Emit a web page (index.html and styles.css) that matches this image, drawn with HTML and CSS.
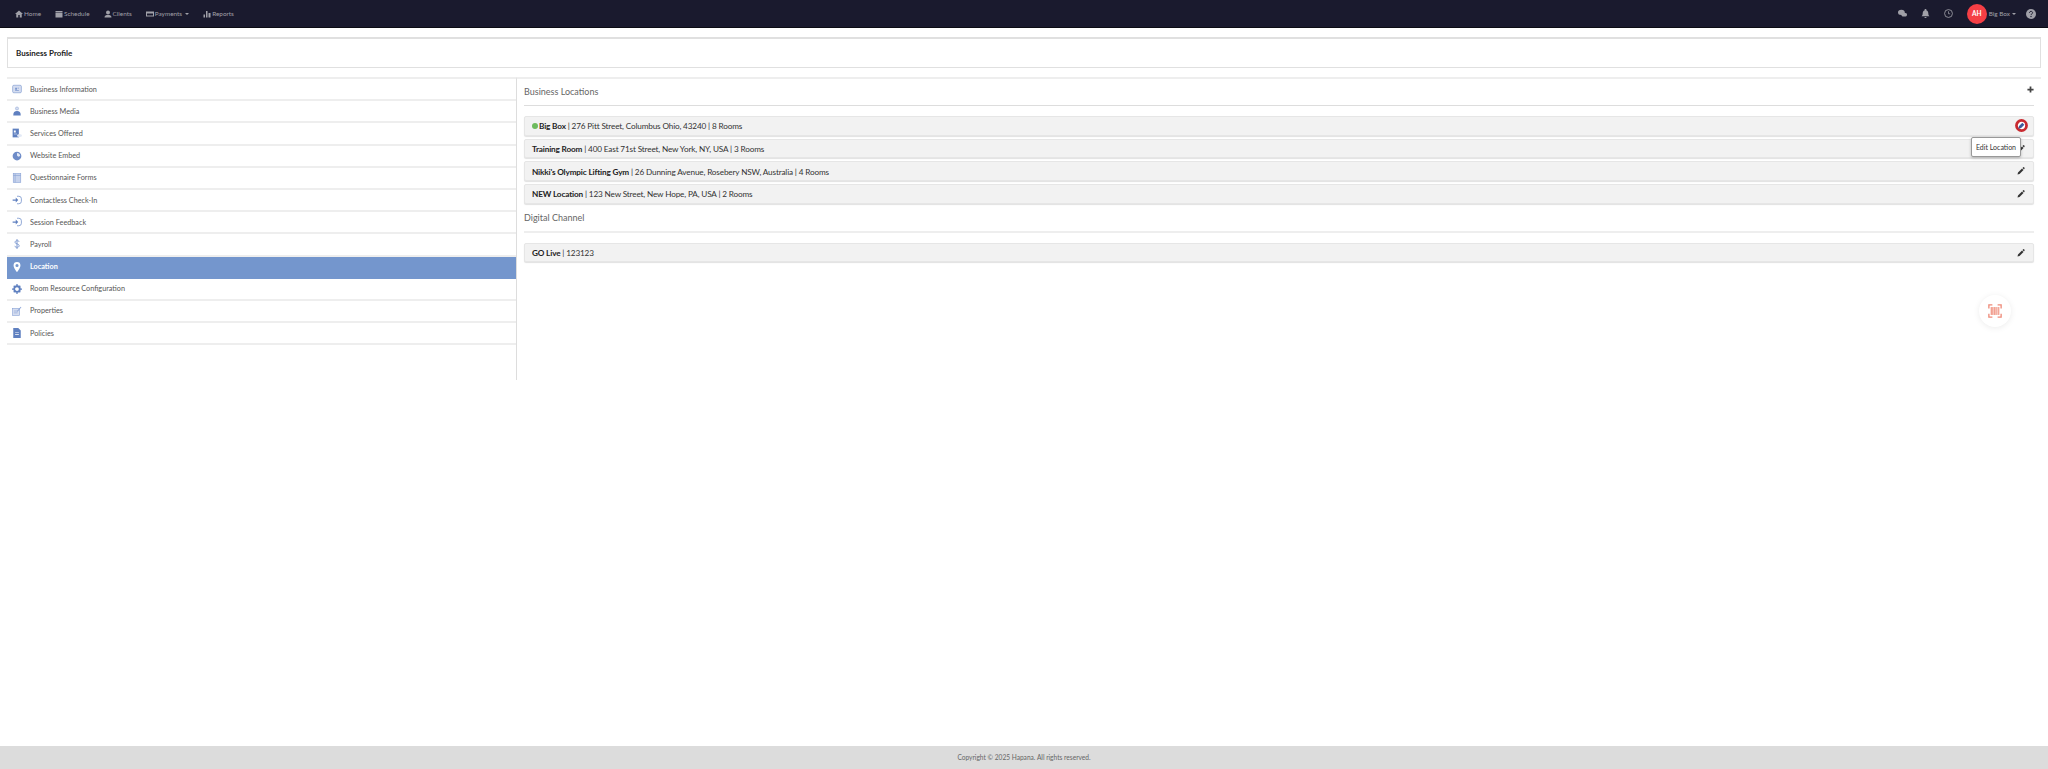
FILE: index.html
```html
<!DOCTYPE html>
<html lang="en">
<head>
<meta charset="UTF-8" />
<meta name="viewport" content="width=device-width, initial-scale=1" />
<title>Business Profile - Location</title>
<link rel="stylesheet" href="styles.css">
</head>
<body>
<nav class="topbar">
  <div class="nav-left">
    <a class="nav-link"><svg viewBox="0 0 16 16"><path d="M8 1 0 8h2.500v7h4v-5h3v5h4V8H16z"/></svg>Home</a>
    <a class="nav-link"><svg viewBox="0 0 16 16"><path d="M1 2h14v3H1zM1 6h14v9H1z"/></svg>Schedule</a>
    <a class="nav-link"><svg viewBox="0 0 16 16"><circle cx="8" cy="5" r="4"/><path d="M1 15c0-4 3-5 7-5s7 1 7 5z"/></svg>Clients</a>
    <a class="nav-link"><svg viewBox="0 0 16 16"><path d="M0 3h16v10H0zM2 7v4h12V7z" fill-rule="evenodd"/></svg>Payments<span class="caret"></span></a>
    <a class="nav-link"><svg viewBox="0 0 16 16"><path d="M1 9h3v6H1zM6 2h3v13H6zM11 6h4v9h-4z"/></svg>Reports</a>
  </div>
  <div class="nav-right">
    <svg class="nav-icon" viewBox="0 0 16 16"><ellipse cx="6" cy="6" rx="6" ry="4.500"/><ellipse cx="11" cy="10" rx="5" ry="3.500"/></svg>
    <svg class="nav-icon" viewBox="0 0 16 16"><path d="M8 0a1.500 1.500 0 0 1 1.500 2C12 3 13 5 13 8c0 3 1 4 2 5H1c1-1 2-2 2-5 0-3 1-5 3.500-6A1.500 1.500 0 0 1 8 0zM6 14h4a2 2 0 0 1-4 0z"/></svg>
    <svg class="nav-icon clock" viewBox="0 0 16 16"><circle cx="8" cy="8" r="7" fill="none" stroke="currentColor" stroke-width="1.500"/><path d="M8 4v4.500h3" fill="none" stroke="currentColor" stroke-width="1.300"/></svg>
    <span class="avatar">AH</span>
    <span class="account">Big Box<span class="caret"></span></span>
    <svg class="nav-icon help" viewBox="0 0 16 16"><circle cx="8" cy="8" r="8"/><path d="M5.500 6.200C5.500 3 10.500 3 10.500 6c0 2-2.500 2-2.500 3.500" fill="none" stroke="#1a1a2e" stroke-width="1.600"/><circle cx="8" cy="12" r="1.100" fill="#1a1a2e"/></svg>
  </div>
</nav>

<main class="page">
  <header class="page-title">Business Profile</header>

  <div class="profile">
    <ul class="side-menu">
      <li class="side-item"><svg viewBox="0 0 16 16"><rect x="1" y="2" width="14" height="12" rx="2" fill="#d5ddf0" stroke="#7c98cf"/><path d="M5 6h3v3H5zM9 6h2v1H9zM5 10h6v1H5z" fill="#7c98cf"/></svg>Business Information</li>
      <li class="side-item"><svg viewBox="0 0 16 16"><circle cx="8" cy="4" r="2.500" fill="#d5ddf0" stroke="#7c98cf" stroke-width=".7"/><path d="M2 15c0-5 2-7 6-7s6 2 6 7z" fill="#5f80c0"/></svg>Business Media</li>
      <li class="side-item"><svg viewBox="0 0 16 16"><path d="M1 1h10v14H1z" fill="#5f80c0"/><path d="M3 4h3v3H3zM3 9h5v1H3z" fill="#fff"/><ellipse cx="12" cy="12" rx="4" ry="2.500" fill="#e3e9f6"/></svg>Services Offered</li>
      <li class="side-item"><svg viewBox="0 0 16 16"><circle cx="8" cy="8" r="7" fill="#6e8cc8"/><path d="M8 3c3 0 5 2 5 5l-3 1-2-2z" fill="#e3e9f6"/></svg>Website Embed</li>
      <li class="side-item"><svg viewBox="0 0 16 16"><rect x="2" y="1" width="12" height="14" fill="#c6d2ec" stroke="#8aa3d6"/><path d="M5 1v14M2 4h12" stroke="#8aa3d6" fill="none"/></svg>Questionnaire Forms</li>
      <li class="side-item"><svg viewBox="0 0 16 16"><path d="M8 2h3a4 4 0 0 1 4 4v4a4 4 0 0 1-4 4H8" fill="none" stroke="#6e8cc8" stroke-width="1.200"/><path d="M1 7h5V4l4 4-4 4V9H1z" fill="#5f80c0"/></svg>Contactless Check-In</li>
      <li class="side-item"><svg viewBox="0 0 16 16"><path d="M8 2h3a4 4 0 0 1 4 4v4a4 4 0 0 1-4 4H8" fill="none" stroke="#6e8cc8" stroke-width="1.200"/><path d="M1 7h5V4l4 4-4 4V9H1z" fill="#5f80c0"/></svg>Session Feedback</li>
      <li class="side-item"><svg viewBox="0 0 16 16"><path d="M11.500 4.500C11 3 9.500 2.800 8 2.800 6 2.800 4.800 3.800 4.800 5.200 4.800 8.500 11.500 7 11.500 10.800c0 1.500-1.500 2.400-3.500 2.400-1.700 0-3.200-.6-3.700-2.200M8 0v16" fill="none" stroke="#7c98cf" stroke-width="1.500"/></svg>Payroll</li>
      <li class="side-item active"><svg viewBox="0 0 16 16"><path d="M8 0a5.500 5.500 0 0 0-5.500 5.500C2.500 9.500 8 16 8 16s5.500-6.500 5.500-10.500A5.500 5.500 0 0 0 8 0zm0 3a2.500 2.500 0 1 1 0 5 2.500 2.500 0 0 1 0-5z" fill="#fff" fill-rule="evenodd"/></svg>Location</li>
      <li class="side-item"><svg viewBox="0 0 16 16"><circle cx="8" cy="8" r="4.500" fill="none" stroke="#5f80c0" stroke-width="3"/><path d="M7 0h2v3H7zM7 13h2v3H7zM0 7h3v2H0zM13 7h3v2h-3zM2 3.500 3.500 2l2 2L4 5.500zM10.500 12l1.500-1.500 2 2-1.500 1.500zM2 12.500l2-2L5.500 12l-2 2zM10.500 4l2-2L14 3.500l-2 2z" fill="#5f80c0"/></svg>Room Resource Configuration</li>
      <li class="side-item"><svg viewBox="0 0 16 16"><rect x="1" y="4" width="11" height="11" fill="#d5ddf0" stroke="#8aa3d6"/><path d="M3 8h6M3 11h6" stroke="#8aa3d6"/><path d="m8 8 6-7 1 1-6 7z" fill="#8aa3d6"/></svg>Properties</li>
      <li class="side-item"><svg viewBox="0 0 16 16"><path d="M2 0h8l4 4v12H2z" fill="#5f80c0"/><path d="M5 7h6v1H5zM5 10h6v1H5z" fill="#fff"/></svg>Policies</li>
    </ul>

    <section class="locations">
      <div class="section-head">
        <h3 class="section-title">Business Locations</h3>
        <svg class="add-icon" viewBox="0 0 16 16"><path d="M6 1h4v5h5v4h-5v5H6v-5H1V6h5z"/></svg>
      </div>
      <div class="section-rows">
        <div class="loc-row">
          <span class="loc-text"><span class="dot"></span><b>Big Box</b> | 276 Pitt Street, Columbus Ohio, 43240 | 8 Rooms</span>
          <span class="ban-btn"><svg viewBox="0 0 16 16"><circle cx="8" cy="8" r="6.200" fill="#fff" stroke="#c92a30" stroke-width="3.400"/><path d="M4 12l1-3.500 4-4 2.500 2.500-4 4z" fill="#3f5a9c"/></svg></span>
        </div>
        <div class="loc-row">
          <span class="loc-text"><b>Training Room</b> | 400 East 71st Street, New York, NY, USA | 3 Rooms</span>
          <svg class="edit-icon" viewBox="0 0 16 16"><path d="M1 15l1-4 8-8 3 3-8 8zM11 2l1.500-1.500a1 1 0 0 1 1.500 0l1 1a1 1 0 0 1 0 1.500L14 5z"/></svg>
          <span class="tooltip">Edit Location</span>
        </div>
        <div class="loc-row">
          <span class="loc-text"><b>Nikki's Olympic Lifting Gym</b> | 26 Dunning Avenue, Rosebery NSW, Australia | 4 Rooms</span>
          <svg class="edit-icon" viewBox="0 0 16 16"><path d="M1 15l1-4 8-8 3 3-8 8zM11 2l1.500-1.500a1 1 0 0 1 1.500 0l1 1a1 1 0 0 1 0 1.500L14 5z"/></svg>
        </div>
        <div class="loc-row">
          <span class="loc-text"><b>NEW Location</b> | 123 New Street, New Hope, PA, USA | 2 Rooms</span>
          <svg class="edit-icon" viewBox="0 0 16 16"><path d="M1 15l1-4 8-8 3 3-8 8zM11 2l1.500-1.500a1 1 0 0 1 1.500 0l1 1a1 1 0 0 1 0 1.500L14 5z"/></svg>
        </div>
      </div>
      <div class="section-head digital">
        <h3 class="section-title">Digital Channel</h3>
      </div>
      <div class="section-rows">
        <div class="loc-row">
          <span class="loc-text"><b>GO Live</b> | 123123</span>
          <svg class="edit-icon" viewBox="0 0 16 16"><path d="M1 15l1-4 8-8 3 3-8 8zM11 2l1.500-1.500a1 1 0 0 1 1.500 0l1 1a1 1 0 0 1 0 1.500L14 5z"/></svg>
        </div>
      </div>
    </section>
  </div>
</main>

<span class="scan-btn"><svg viewBox="0 0 16 16"><path d="M1 5V1h4M11 1h4v4M15 11v4h-4M5 15H1v-4" fill="none" stroke="#ee8a78" stroke-width="1.500"/><path d="M3 3.500h10v9H3z" fill="#f2a091"/><path d="M6 3.500v9M9 3.500v9M11 3.500v9" stroke="#fff" stroke-width=".6"/></svg></span>

<footer class="footer">Copyright © 2025 Hapana. All rights reserved.</footer>
</body>
</html>
```

FILE: styles.css
```css
* {
  box-sizing: border-box;
}
body {
  margin: 0;
  height: 100vh;
  display: flex;
  flex-direction: column;
  font-family: 'Lato', 'Inter', sans-serif;
  color: #333;
  background: white;
}
.topbar {
  height: 28px;
  padding: 0 12px 0 15px;
  background: #1a1a2e;
  border-bottom: 1px solid #0c0c14;
  display: flex;
  justify-content: space-between;
  align-items: center;
  color: #a0a0a8;
  font-size: 6.400px;
}
.nav-left {
  display: flex;
  gap: 14px;
}
.nav-link {
  display: flex;
  align-items: center;
  gap: 1px;
}
.nav-link svg {
  width: 8px;
  height: 8px;
  fill: currentColor;
}
.caret {
  display: inline-block;
  margin-left: 2px;
  border-top: 2px solid currentColor;
  border-left: 2px solid transparent;
  border-right: 2px solid transparent;
  vertical-align: middle;
}
.nav-right {
  display: flex;
  align-items: center;
}
.nav-icon {
  width: 9px;
  height: 9px;
  margin-right: 14px;
  fill: currentColor;
}
.nav-icon.clock {
  margin-right: 14px;
}
.nav-icon.help {
  width: 10px;
  height: 10px;
  margin: 0 0 0 10px;
}
.avatar {
  width: 20px;
  height: 20px;
  border-radius: 50%;
  background: #f53f45;
  color: white;
  font-size: 6.500px;
  font-weight: bold;
  display: flex;
  align-items: center;
  justify-content: center;
}
.account {
  margin-left: 2px;
}
.page {
  flex: 1;
  padding: 9px 7px 0;
}
.page-title {
  height: 31px;
  padding: 0 8px;
  border: 1px solid #e0e0e0;
  border-top-width: 2px;
  display: flex;
  align-items: center;
  font-size: 8px;
  font-weight: bold;
  color: #222;
}
.profile {
  margin-top: 9px;
  display: flex;
  height: 303px;
}
.side-menu {
  width: 509px;
  margin: 0;
  padding: 0;
  list-style: none;
  border-top: 2px solid #eee;
  flex-shrink: 0;
}
.side-item {
  height: 22.200px;
  padding-left: 5px;
  display: flex;
  align-items: center;
  border-bottom: 2px solid #eee;
  font-size: 7.250px;
  color: #555;
}
.side-item svg {
  width: 10px;
  height: 10px;
  margin-right: 8px;
}
.side-item.active {
  background: #7496cd;
  border-bottom-color: #7496cd;
  color: white;
  font-weight: bold;
}
.locations {
  flex: 1;
  padding: 0 7px;
  border-left: 1px solid #ddd;
  border-top: 2px solid #eee;
}
.section-head {
  height: 27px;
  border-bottom: 1px solid #ddd;
  display: flex;
  justify-content: space-between;
  padding-bottom: 2px;
  align-items: center;
}
.section-head.digital {
  height: 29px;
  padding-top: 2px;
  border-bottom: 2px solid #eee;
}
.section-title {
  margin: 0;
  font-size: 9px;
  font-weight: normal;
  color: #666;
}
.add-icon {
  width: 7px;
  height: 7px;
  margin-top: -3px;
  fill: #444;
}
.section-rows {
  margin-top: 10px;
  display: flex;
  flex-direction: column;
  gap: 3px;
}
.loc-row {
  position: relative;
  height: 19.700px;
  padding: 0 8px 0 7px;
  background: #f2f2f2;
  border: 1px solid #e6e6e6;
  border-radius: 2px;
  box-shadow: 0 1px 1px rgba(0, 0, 0, 0.12);
  display: flex;
  justify-content: space-between;
  align-items: center;
  font-size: 8.200px;
  letter-spacing: -0.15px;
  color: #333;
}
.loc-text {
  padding-top: 1px;
}
.loc-text b {
  color: #222;
}
.dot {
  display: inline-block;
  width: 6px;
  height: 6px;
  margin-right: 1px;
  border-radius: 50%;
  background: #6dbb5e;
}
.edit-icon {
  width: 8px;
  height: 8px;
  fill: #333;
}
.ban-btn {
  display: flex;
  margin-right: -3px;
}
.ban-btn svg {
  width: 13px;
  height: 13px;
}
.tooltip {
  position: absolute;
  top: -3px;
  right: 12px;
  width: 50px;
  height: 20px;
  background: white;
  border: 1px solid #999;
  border-radius: 2px;
  box-shadow: 0 1px 3px rgba(0, 0, 0, 0.25);
  display: flex;
  align-items: center;
  justify-content: center;
  white-space: nowrap;
  font-size: 7px;
  letter-spacing: 0;
  color: #333;
}
.scan-btn {
  position: absolute;
  left: 1979px;
  top: 295px;
  width: 32px;
  height: 32px;
  border-radius: 50%;
  background: white;
  box-shadow: 0 1px 6px rgba(0, 0, 0, 0.08);
  display: flex;
  align-items: center;
  justify-content: center;
}
.scan-btn svg {
  width: 14px;
  height: 14px;
}
.footer {
  height: 23px;
  padding-bottom: 2px;
  background: #dcdcdc;
  display: flex;
  align-items: center;
  justify-content: center;
  font-size: 6.600px;
  color: #666;
}
```
